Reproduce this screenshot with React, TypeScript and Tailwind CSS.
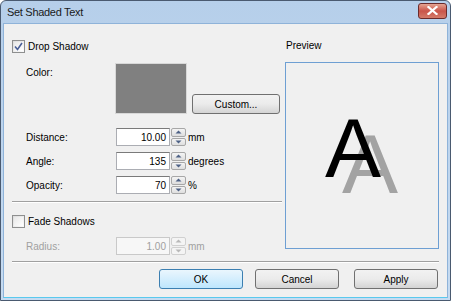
import React from "react";

function CheckBox({ checked }: { checked?: boolean }) {
  return (
    <span className="flex h-[13px] w-[13px] items-center justify-center border border-[#8e8f8f] bg-gradient-to-br from-[#dcdcdc] to-[#fbfbfb]">
      <span className="flex h-[9px] w-[9px] items-center justify-center bg-gradient-to-br from-[#e8e8e8] to-[#ffffff]">
        {checked && (
          <svg width="9" height="9" viewBox="0 0 9 9">
            <path d="M1 4.5 L3.5 7.5 L8 1" fill="none" stroke="#4a5f97" strokeWidth="1.6" />
          </svg>
        )}
      </span>
    </span>
  );
}

function Spinner({ disabled }: { disabled?: boolean }) {
  const arrow = disabled ? "#b8b8b8" : "#4d6185";
  const half =
    "flex flex-1 items-center justify-center rounded-[2px] border " +
    (disabled ? "border-[#d0d0d0] bg-[#f4f4f4]" : "border-[#a7a7a7] bg-gradient-to-b from-[#f4f4f4] to-[#dedede]");
  return (
    <div className="ml-[1px] flex h-[18px] w-[15px] flex-col gap-[1px]">
      <div className={half}>
        <svg width="7" height="4" viewBox="0 0 7 4">
          <path d="M0.5 3.5 L3.5 0.5 L6.5 3.5 Z" fill={arrow} />
        </svg>
      </div>
      <div className={half}>
        <svg width="7" height="4" viewBox="0 0 7 4">
          <path d="M0.5 0.5 L3.5 3.5 L6.5 0.5 Z" fill={arrow} />
        </svg>
      </div>
    </div>
  );
}

function NumRow({
  label,
  value,
  unit,
  disabled,
  className,
}: {
  label: string;
  value: string;
  unit: string;
  disabled?: boolean;
  className?: string;
}) {
  return (
    <div className={"flex h-[18px] items-center " + (className ?? "")}>
      <span className={"w-[104px] pl-[14px] " + (disabled ? "text-[#a0a0a0]" : "")}>{label}</span>
      <div
        className={
          "flex h-[18px] w-[54px] items-center justify-end border pr-[3px] " +
          (disabled
            ? "border-[#c9c9c9] bg-[#f7f7f7] text-[#a0a0a0]"
            : "border-[#abadb3] border-t-[#7a7a7a] bg-white")
        }
      >
        {value}
      </div>
      <Spinner disabled={disabled} />
      <span className={"ml-[2px] " + (disabled ? "text-[#a0a0a0]" : "")}>{unit}</span>
    </div>
  );
}

function Button({ label, primary, className }: { label: string; primary?: boolean; className?: string }) {
  return (
    <div
      className={
        "flex h-[20px] w-[84px] items-center justify-center rounded-[3px] border " +
        (primary
          ? "border-[#3c7fb1] bg-gradient-to-b from-[#eaf6fd] to-[#bee6fd] "
          : "border-[#707070] bg-gradient-to-b from-[#f2f2f2] via-[#ebebeb] to-[#d4d4d4] ") +
        (className ?? "")
      }
    >
      {label}
    </div>
  );
}

export default function App() {
  return (
    <div className="flex h-[301px] w-[451px] flex-col rounded-t-[6px] border border-[#4a5a70] bg-gradient-to-b from-[#b6cfea] to-[#c6dbf1] font-['Liberation_Sans',sans-serif] text-[10px] text-black">
      {/* Title bar */}
      <div className="flex h-[22px] items-center justify-between pl-[6px] pr-[3px]">
        <span className="text-[11px] tracking-[-0.3px] text-[#1a1a1a]">Set Shaded Text</span>
        <div className="mt-[-3px] flex h-[16px] w-[29px] items-center justify-center rounded-[3px] border border-[#6b2b2b] bg-gradient-to-b from-[#e4a493] via-[#c9544a] to-[#d47b6a]">
          <svg width="11" height="9" viewBox="0 0 11 9">
            <path d="M1.5 1 L9.5 8 M9.5 1 L1.5 8" stroke="#ffffff" strokeWidth="2.2" strokeLinecap="square" />
          </svg>
        </div>
      </div>

      {/* Client area */}
      <div className="mx-[2px] mb-[2px] flex flex-1 flex-col border border-[#8fb3d9] border-b-[#59c9ee] bg-[#f0f0f0]">
        <div className="flex pl-[8px]">
          {/* Left column */}
          <div className="flex w-[270px] flex-col">
            <div className="mt-[15px] flex h-[14px] items-center gap-[3px]">
              <CheckBox checked />
              <span>Drop Shadow</span>
            </div>

            <div className="mt-[10px] flex">
              <span className="mt-[2px] w-[103px] pl-[14px]">Color:</span>
              <div className="h-[51px] w-[72px] border border-[#d8d8d8] bg-[#808080]" />
              <div className="ml-[5px] mt-[31px] flex h-[20px] w-[88px] items-center justify-center rounded-[3px] border border-[#707070] bg-gradient-to-b from-[#f2f2f2] via-[#ebebeb] to-[#d4d4d4]">
                Custom...
              </div>
            </div>

            <NumRow className="mt-[14px]" label="Distance:" value="10.00" unit="mm" />
            <NumRow className="mt-[6px]" label="Angle:" value="135" unit="degrees" />
            <NumRow className="mt-[6px]" label="Opacity:" value="70" unit="%" />

            <div className="mt-[7px] h-[2px] border-t border-b border-t-[#a0a0a0] border-b-white" />

            <div className="mt-[11px] flex h-[14px] items-center gap-[3px]">
              <CheckBox />
              <span>Fade Shadows</span>
            </div>

            <NumRow className="mt-[9px]" label="Radius:" value="1.00" unit="mm" disabled />
          </div>

          {/* Preview */}
          <div className="ml-[3px] flex flex-col">
            <span className="mt-[14px] pl-[1px]">Preview</span>
            <div className="relative mt-[9px] h-[187px] w-[154px] overflow-hidden border border-[#6e9fd3] bg-[#f0f0f0]">
              <span className="absolute left-[56px] top-[59px] text-[84px] leading-none text-[#a3a3a3]">A</span>
              <span className="absolute left-[39px] top-[43px] text-[84px] leading-none text-black">A</span>
            </div>
          </div>
        </div>

        <div className="ml-[8px] mr-[8px] mt-[6px] h-[2px] border-t border-b border-t-[#a0a0a0] border-b-white" />

        <div className="mt-[6px] flex justify-end pr-[9px]">
          <Button label="OK" primary />
          <Button label="Cancel" className="ml-[12px]" />
          <Button label="Apply" className="ml-[15px]" />
        </div>
      </div>
    </div>
  );
}
